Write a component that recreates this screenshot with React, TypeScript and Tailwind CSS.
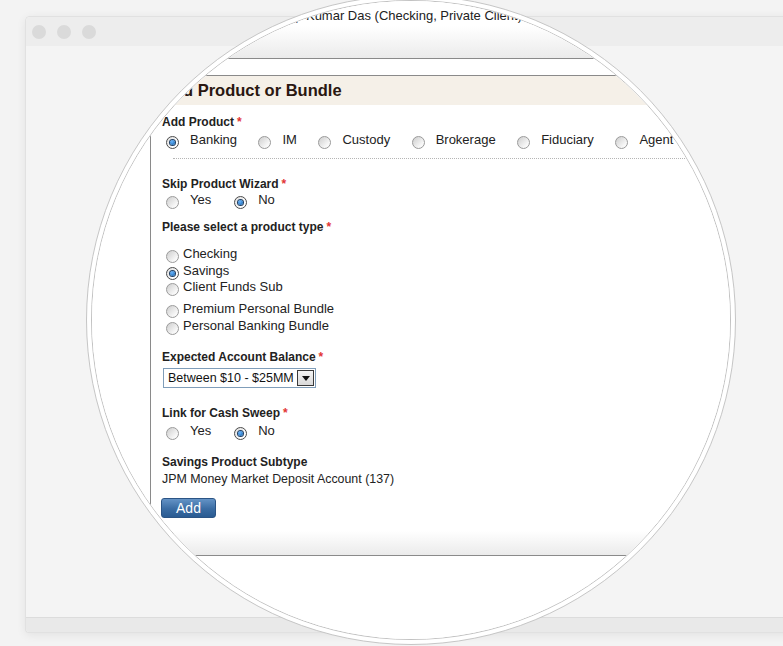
import React from "react";

function Radio({ checked = false }: { checked?: boolean }) {
  if (checked) {
    return (
      <span className="mt-[4px] inline-flex h-[13px] w-[13px] shrink-0 items-center justify-center rounded-full border border-[#4a4a4a] bg-[linear-gradient(135deg,#dcdcdc,#ffffff_70%)]">
        <span className="h-[5px] w-[5px] rounded-full bg-[radial-gradient(circle_at_40%_35%,#6ab6ff,#0d5aa3)] shadow-[0_0_0_1px_#213f63]" />
      </span>
    );
  }
  return (
    <span className="mt-[4px] inline-block h-[13px] w-[13px] shrink-0 rounded-full border border-[#9a9a9a] bg-[linear-gradient(135deg,#cdcdcd,#f8f8f8_75%)]" />
  );
}

function Label({ text, required = false }: { text: string; required?: boolean }) {
  return (
    <div className="h-[14px] text-[12px] leading-[14px] font-bold whitespace-nowrap text-[#222]">
      {text}
      {required && <span className="ml-[3px] text-[#e23434]">*</span>}
    </div>
  );
}

function InlineOptions({
  options,
  selected,
  className = "",
}: {
  options: string[];
  selected: string;
  className?: string;
}) {
  return (
    <div className={`flex h-[16px] items-center pl-[4px] whitespace-nowrap ${className}`}>
      {options.map((o) => (
        <div key={o} className="flex items-center gap-[11px]">
          <Radio checked={o === selected} />
          <span className="text-[13px] leading-[16px] text-[#222]">{o}</span>
        </div>
      ))}
    </div>
  );
}

function ListOption({ text, checked = false, className = "" }: { text: string; checked?: boolean; className?: string }) {
  return (
    <div className={`flex h-[16px] items-center gap-[4px] pl-[4px] whitespace-nowrap ${className}`}>
      <Radio checked={checked} />
      <span className="text-[13px] leading-[16px] text-[#222]">{text}</span>
    </div>
  );
}

function LensContent() {
  return (
    <div className="absolute left-[-92px] top-[-1px] w-[783px] bg-white">
      {/* page header strip */}
      <div className="h-[59px] border-b border-[#8a8a8a] bg-[linear-gradient(to_bottom,#ffffff_45%,#ebebeb)] pt-[8px] pl-[272px]">
        <div className="text-[13px] leading-[15px] whitespace-nowrap text-[#222]">
          Anup Kumar Das (Checking, Private Client)
        </div>
      </div>
      <div className="h-[16px]" />

      {/* form panel */}
      <div className="ml-[150px] border-t border-b border-l border-[#8a8a8a]">
        <div className="h-[29px] bg-[#f5f0e8] pl-[10px] text-[16.5px] leading-[29px] font-bold whitespace-nowrap text-[#2a1710]">
          Add Product or Bundle
        </div>

        <div className="pl-[11px]">
          <div className="pt-[10px]">
            <Label text="Add Product" required />
          </div>
          <InlineOptions
            className="mt-[3px] gap-[21.5px]"
            options={["Banking", "IM", "Custody", "Brokerage", "Fiduciary", "Agent Services"]}
            selected="Banking"
          />
          <div className="ml-[11px] h-[11px] border-b border-dotted border-[#b5b5b5]" />

          <div className="mt-[18px]">
            <Label text="Skip Product Wizard" required />
          </div>
          <InlineOptions className="mt-[1px] gap-[23px]" options={["Yes", "No"]} selected="No" />

          <div className="mt-[12px]">
            <Label text="Please select a product type" required />
          </div>
          <ListOption className="mt-[12px]" text="Checking" />
          <ListOption className="mt-[1px]" text="Savings" checked />
          <ListOption text="Client Funds Sub" />
          <ListOption className="mt-[6px]" text="Premium Personal Bundle" />
          <ListOption className="mt-[1px]" text="Personal Banking Bundle" />

          <div className="mt-[16px]">
            <Label text="Expected Account Balance" required />
          </div>
          <div className="mt-[4px] ml-[1px] flex h-[20px] w-[153px] items-center justify-between border border-[#7f9db9] bg-white pl-[4px] pr-[1px]">
            <span className="text-[12.5px] leading-[16px] whitespace-nowrap text-[#111]">Between $10 - $25MM</span>
            <span className="flex h-[16px] w-[17px] items-center justify-center border border-[#3a3a3a] bg-[linear-gradient(to_bottom,#f4f4f4,#d9d9d9)]">
              <svg width="8" height="5" viewBox="0 0 8 5">
                <path d="M0 0H8L4 5Z" fill="#111" />
              </svg>
            </span>
          </div>

          <div className="mt-[18px]">
            <Label text="Link for Cash Sweep" required />
          </div>
          <InlineOptions className="mt-[3px] gap-[23px]" options={["Yes", "No"]} selected="No" />

          <div className="mt-[16px]">
            <Label text="Savings Product Subtype" />
          </div>
          <div className="mt-[3px] h-[14px] text-[12.4px] leading-[14px] whitespace-nowrap text-[#222]">
            JPM Money Market Deposit Account (137)
          </div>

          <button className="mt-[12px] -ml-[1px] flex h-[20px] w-[55px] items-center justify-center rounded-[3px] border border-[#2b5485] bg-[linear-gradient(to_bottom,#6493c6,#3a6ca3_55%,#2a5b92)] text-[14px] leading-[16px] text-white">
            Add
          </button>
        </div>
        <div className="h-[37px] bg-[linear-gradient(to_bottom,#ffffff_35%,#ebebeb)]" />
      </div>
      <div className="h-[120px]" />
    </div>
  );
}

export default function App() {
  return (
    <div className="relative h-[646px] w-[783px] overflow-hidden bg-[#f3f3f3] font-['Liberation_Sans',Arial,sans-serif]">
      <div className="pt-[16px] pl-[25px]">
        <div className="flex h-[617px] w-[780px] flex-col overflow-hidden rounded-tl-[5px] rounded-bl-[4px] border border-r-0 border-[#e1e1e1] bg-[#f4f4f4] shadow-[0_2px_10px_rgba(0,0,0,0.07)]">
          <div className="flex h-[29px] shrink-0 items-center gap-[11px] bg-[#ededed] pl-[6px]">
            <span className="h-[14px] w-[14px] rounded-full bg-[#dadada]" />
            <span className="h-[14px] w-[14px] rounded-full bg-[#dadada]" />
            <span className="h-[14px] w-[14px] rounded-full bg-[#dadada]" />
          </div>
          <div className="flex-1" />
          <div className="h-[15px] shrink-0 border-t border-[#dcdcdc] bg-[#e9e9e9]" />
        </div>
      </div>

      {/* magnifier lens */}
      <div className="absolute left-[86px] top-[-5px] h-[650px] w-[650px] rounded-full border border-[#c6c6c6] bg-white p-[4px]">
        <div className="relative h-full w-full overflow-hidden rounded-full border border-[#c2c2c2]">
          <LensContent />
        </div>
      </div>
    </div>
  );
}
